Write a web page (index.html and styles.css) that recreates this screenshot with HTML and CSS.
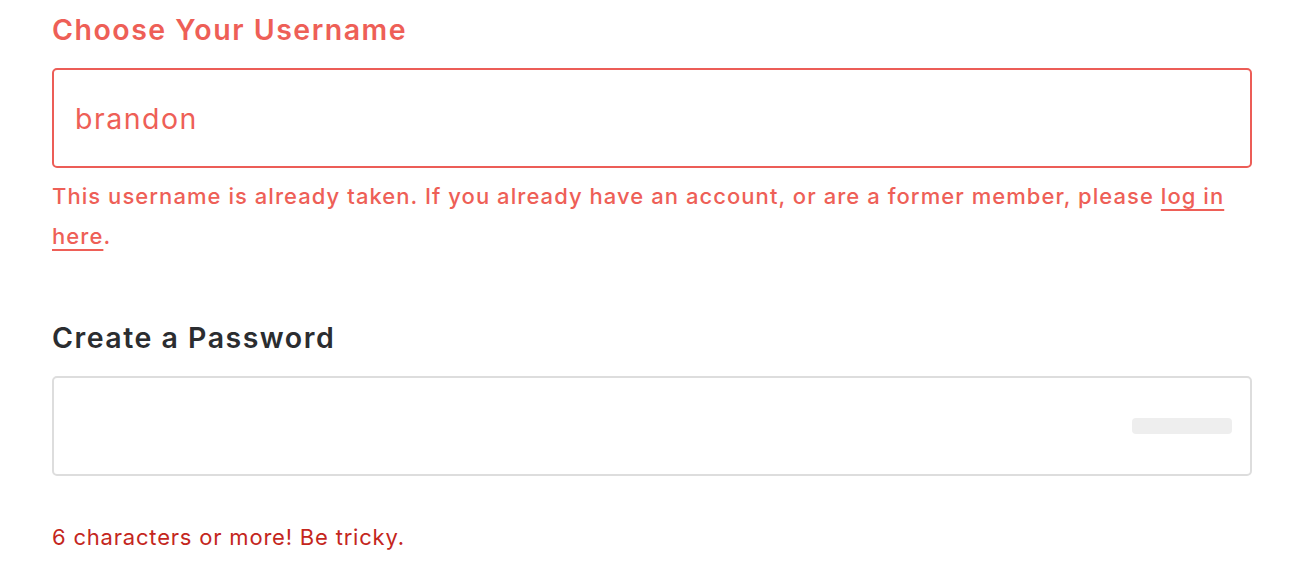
FILE: index.html
```html
<!DOCTYPE html>
<html>
<head>
<meta charset="utf-8">
<link rel="stylesheet" href="styles.css">
</head>
<body>
<form class="form">
  <div class="field">
    <label class="label label-error" for="username">Choose Your Username</label>
    <div class="input input-error">
      <input id="username" class="input-text" type="text" value="brandon">
    </div>
    <p class="error-msg">This username is already taken. If you already have an account, or are a former member, please <a href="#" class="error-link">log in</a> <a href="#" class="error-link">here</a>.</p>
  </div>
  <div class="field field-password">
    <label class="label" for="password">Create a Password</label>
    <div class="input">
      <input id="password" class="input-text" type="password" value="">
      <span class="strength"></span>
    </div>
    <p class="hint">6 characters or more! Be tricky.</p>
  </div>
</form>
</body>
</html>
```
FILE: styles.css
```css
html, body {
  margin: 0;
  padding: 0;
  background: #ffffff;
}
body {
  font-family: Inter, "Open Sans", "Liberation Sans", sans-serif;
}
.form {
  width: 1200px;
  padding: 12px 0 0 52px;
}
.field {
  display: flex;
  flex-direction: column;
}
.label {
  font-size: 28.5px;
  font-weight: 600;
  line-height: 36px;
  letter-spacing: 1.5px;
  color: #2b2d30;
  margin-bottom: 20px;
}
.label-error {
  color: #ee5f57;
}
.input {
  box-sizing: border-box;
  height: 100px;
  border: 2px solid #dddddd;
  border-radius: 5px;
  display: flex;
  align-items: center;
  padding: 0 18px 0 21px;
}
.input-error {
  border-color: #ec5d57;
}
.input-text {
  flex: 1;
  border: 0;
  outline: 0;
  padding: 0;
  background: transparent;
  font-family: inherit;
  font-size: 28.5px;
  letter-spacing: 1.5px;
  color: #ee5f57;
}
.strength {
  width: 100px;
  height: 16px;
  border-radius: 4px;
  background: #eeeeee;
}
.error-msg {
  margin: 8px 0 0;
  font-size: 22px;
  font-weight: 500;
  line-height: 40px;
  letter-spacing: 1.05px;
  color: #ee5f57;
}
.error-link {
  color: #ee5f57;
  text-decoration: underline;
  text-underline-offset: 5px;
}
.field-password {
  margin-top: 64px;
}
.hint {
  margin: 46px 0 0;
  font-size: 22px;
  line-height: 30px;
  letter-spacing: 0.8px;
  color: #c4261d;
}
```
